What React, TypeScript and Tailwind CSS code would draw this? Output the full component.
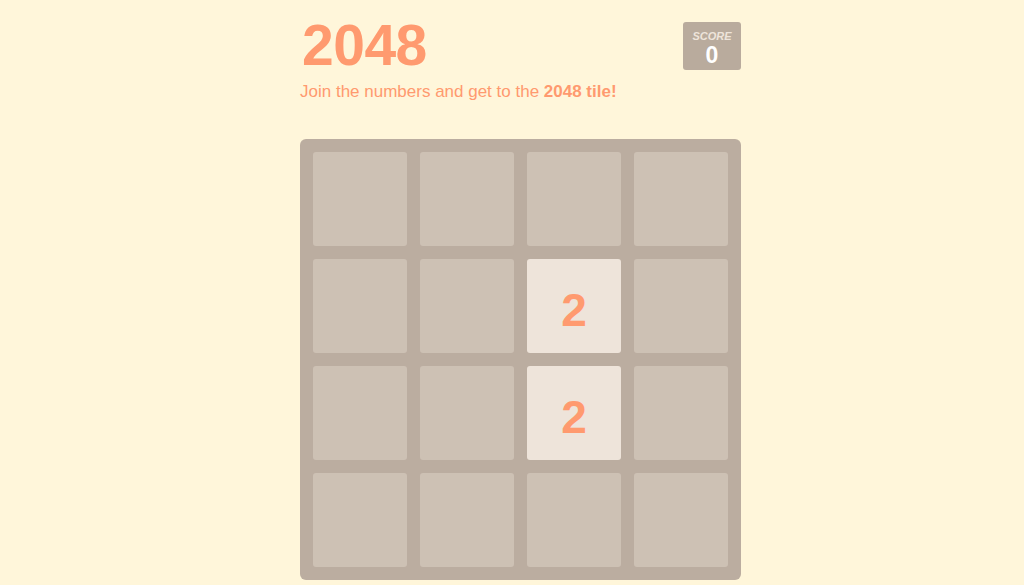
const board: (number | null)[][] = [
  [null, null, null, null],
  [null, null, 2, null],
  [null, null, 2, null],
  [null, null, null, null],
];

export default function App() {
  return (
    <div
      className="min-h-[585px] w-full bg-[#fff6da] text-[#ff9a6f]"
      style={{ fontFamily: '"Liberation Sans", Arial, sans-serif' }}
    >
      <div className="ml-[300px] w-[441px] pt-[17px]">
        <div className="flex h-[56px] items-start justify-between">
          <h1 className="ml-[2px] text-[57px] font-bold leading-[56px] tracking-[-0.5px]">2048</h1>
          <div className="mt-[5px] flex h-[48px] w-[58px] flex-col items-center rounded-[3px] bg-[#b9ab9d] pt-[8px]">
            <span className="text-[11px] font-bold italic leading-[12px] text-[#eee4da]">SCORE</span>
            <span className="mt-[1px] text-[23px] font-bold leading-[24px] text-white">0</span>
          </div>
        </div>
        <p className="mt-[9px] text-[17px] leading-[20px]">
          Join the numbers and get to the <strong>2048 tile!</strong>
        </p>
        <div className="mt-[37px] grid grid-cols-4 gap-[13px] rounded-[6px] bg-[#bbada0] p-[13px]">
          {board.flat().map((v, i) => (
            <div
              key={i}
              className={`flex h-[94px] items-center justify-center rounded-[3px] ${
                v ? "bg-[#eee4da]" : "bg-[#cdc1b4]"
              }`}
            >
              {v && <span className="mt-[8px] text-[46px] font-bold leading-none text-[#ff9a6f]">{v}</span>}
            </div>
          ))}
        </div>
      </div>
    </div>
  );
}
